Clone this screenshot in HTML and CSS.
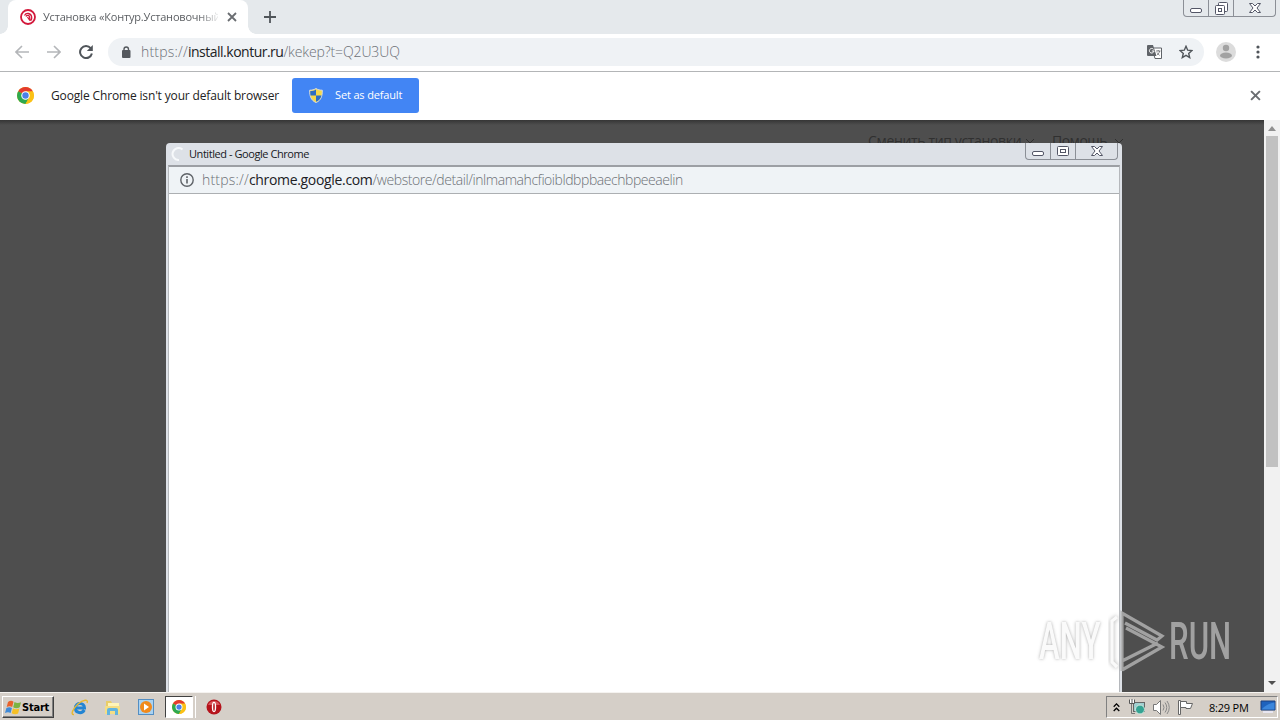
FILE: index.html
```html
<!DOCTYPE html>
<html lang="ru">
<head>
    <meta charset="UTF-8">
    <title>Установка «Контур.Установочный диск»</title>
    <link rel="stylesheet" href="styles.css">
</head>
<body>

    <!-- shared icons -->
    <svg class="defs" width="0" height="0">
        <symbol id="chrome" viewBox="0 0 16 16">
            <circle cx="8" cy="8" r="8" fill="#fbc116"/>
            <path d="M8 8L1.1 4A8 8 0 0 1 14.9 4z" fill="#e33b2e"/>
            <path d="M1.1 4A8 8 0 0 0 8 16L11.4 10 8 8z" fill="#2da94f"/>
            <path d="M8 4h6.9A8 8 0 0 1 8 16l3.4-6z" fill="#fbc116"/>
            <circle cx="8" cy="8" r="4" fill="#fff"/>
            <circle cx="8" cy="8" r="3" fill="#4a80e8"/>
        </symbol>
        <symbol id="close" viewBox="0 0 10 10">
            <path d="M1 1l8 8M9 1L1 9" stroke="#6a6d71" stroke-width="1.8" fill="none"/>
        </symbol>
        <symbol id="win-min" viewBox="0 0 13 6">
            <rect x="0.5" y="0.5" width="11" height="4" rx="1.5" fill="#fff" stroke="#535666"/>
        </symbol>
        <symbol id="win-close" viewBox="0 0 12 10">
            <path d="M.5.5h3L6 3 8.500.5h3L8 5l3.500 4.500h-3L6 7 3.500 9.500h-3L4 5z" fill="#fff" stroke="#535666"/>
        </symbol>
    </svg>

    <div class="browser">
        <div class="tabstrip">
            <div class="tab">
                <svg class="favicon" width="16" height="16" viewBox="0 0 16 16" fill="none" stroke="#d3183b">
                    <circle cx="8" cy="8" r="7" stroke-width="1.8"/>
                    <path d="M4.500 6.500C6 3.500 11 3.700 11.700 8c.2 1.500-.2 2.500-.7 3.500M6 7.500c1-1.800 3.500-1.300 3.700.8L10 12M7.500 8l2 3" stroke-width="1.300"/>
                </svg>
                <span class="tab-title">Установка «Контур.Установочный</span>
                <svg class="tab-close" width="10" height="10"><use href="#close"/></svg>
            </div>
            <svg class="new-tab" width="12" height="12" viewBox="0 0 12 12"><path d="M6 0v12M0 6h12" stroke="#50555a" stroke-width="1.800"/></svg>
            <div class="win-buttons main-buttons">
                <span><svg width="13" height="6"><use href="#win-min"/></svg></span>
                <span><svg width="13" height="13" viewBox="0 0 13 13" fill="#fff" stroke="#535666"><rect x="3.500" y=".5" width="9" height="9" rx="1"/><rect x=".5" y="3.500" width="9" height="9" rx="1"/><rect x="3.500" y="6.500" width="3" height="3"/></svg></span>
                <span class="wide"><svg width="12" height="10"><use href="#win-close"/></svg></span>
            </div>
        </div>

        <div class="toolbar">
            <svg class="nav" width="14" height="14" viewBox="0 0 14 14" fill="none" stroke="#b4b6b9" stroke-width="1.600"><path d="M14 7H1.500M7 1L1 7l6 6"/></svg>
            <svg class="nav" width="14" height="14" viewBox="0 0 14 14" fill="none" stroke="#b4b6b9" stroke-width="1.600"><path d="M0 7h12.500M7 1l6 6-6 6"/></svg>
            <svg class="nav" width="14" height="14" viewBox="0 0 14 14"><path d="M11.700 3.200A6 6 0 1 0 12.900 8.500" fill="none" stroke="#50555a" stroke-width="2"/><path d="M13.800 0v6H7.800z" fill="#50555a"/></svg>
            <div class="omnibox">
                <svg class="lock" width="10" height="12" viewBox="0 0 10 12"><rect x="1" y="4" width="8.500" height="8" rx="1" fill="#55595e"/><path d="M3 5V3.200a2.200 2.200 0 0 1 4.500 0V5" fill="none" stroke="#55595e" stroke-width="1.400"/></svg>
                <span class="url main-url"><i>https://</i><b>install.kontur.ru</b>/kekep?t=Q2U3UQ</span>
                <svg class="translate" width="15" height="14" viewBox="0 0 15 14">
                    <path d="M5 3h9.500v10.500H8z" fill="#fff" stroke="#5f6368"/>
                    <path d="M0 1a1 1 0 0 1 1-1h5l3.500 11H1a1 1 0 0 1-1-1z" fill="#5f6368"/>
                    <path d="M6.500 4.300A2.300 2.300 0 1 0 7 6H4.800" fill="none" stroke="#fff"/>
                    <path d="M9 6h4.500M11.200 5v1M12.700 6c-.5 2-1.500 3-2.700 4M10 7.500l2.500 3" fill="none" stroke="#5f6368" stroke-width=".8"/>
                </svg>
                <svg width="14" height="14" viewBox="0 0 14 14"><path d="M7 1.300l1.700 3.900 4.200.4-3.200 2.800 1 4.200L7 10.400l-3.700 2.200 1-4.200L1.100 5.600l4.200-.4z" fill="none" stroke="#50555a" stroke-width="1.400"/></svg>
            </div>
            <svg class="avatar" width="20" height="20" viewBox="0 0 20 20"><circle cx="10" cy="10" r="10" fill="#dcdcdc"/><circle cx="10" cy="6" r="3.200" fill="#a2a2a2"/><ellipse cx="10" cy="13.500" rx="6" ry="3" fill="#a2a2a2"/></svg>
            <svg class="menu" width="4" height="14" viewBox="0 0 4 14" fill="#50555a"><circle cx="2" cy="2" r="1.600"/><circle cx="2" cy="7" r="1.600"/><circle cx="2" cy="12" r="1.600"/></svg>
        </div>

        <div class="infobar">
            <svg width="17" height="17"><use href="#chrome"/></svg>
            <span class="info-text">Google Chrome isn't your default browser</span>
            <button class="default-btn">
                <svg width="14" height="15" viewBox="0 0 14 15">
                    <path d="M7 .5c2 1.300 4 1.700 6.300 1.700C13.500 8 12 12.500 7 14.500 2 12.500.5 8 .7 2.200 3 2.200 5 1.800 7 .5z" fill="#f5d94b" stroke="#d5dbe0"/>
                    <path d="M7 1.500v6H1.500C1.200 6 1.200 4.500 1.300 3 3.500 3 5.500 2.500 7 1.500zM7 7.500h5.500c-.6 3-2.500 5-5.500 6.300z" fill="#2d6ec4"/>
                </svg>
                <span>Set as default</span>
            </button>
            <svg class="info-close" width="11" height="11"><use href="#close"/></svg>
        </div>

        <div class="viewport">
            <div class="page">
                <div class="page-nav">
                    <span class="type">Сменить тип установки</span>
                    <svg width="10" height="6" viewBox="0 0 10 6"><path d="M1 1l4 4 4-4" fill="none" stroke="#303030"/></svg>
                    <span class="help">Помощь</span>
                    <svg width="10" height="6" viewBox="0 0 10 6"><path d="M1 1l4 4 4-4" fill="none" stroke="#303030"/></svg>
                </div>
            </div>
            <div class="scrollbar">
                <svg width="8" height="5" viewBox="0 0 8 5"><path d="M0 5l4-5 4 5z" fill="#909090"/></svg>
                <div class="thumb"></div>
                <svg class="down" width="8" height="4" viewBox="0 0 8 4"><path d="M0 0h8L4 4z" fill="#505050"/></svg>
            </div>
        </div>
    </div>

    <div class="taskbar">
        <div class="start">
            <svg width="17" height="15" viewBox="0 0 17 15">
                <path d="M3 2c2-1.500 4-1.500 5.500-.3L7.200 7C5.500 6 3.500 6 1.700 7z" fill="#e8622c"/>
                <path d="M9.500 2c2 1.300 4 1.300 6.500.2L14.700 7.300c-2 1.200-4.500 1.200-6.500 0z" fill="#7cb342"/>
                <path d="M1.400 8c2-1 4-1 5.500 0l-1.300 5C4 12 2 12 0 13z" fill="#3f8ad8"/>
                <path d="M8 8.300c2 1.200 4 1.200 6.400.2l-1.300 5c-2 1.200-4.500 1-6.400-.2z" fill="#f6c026"/>
            </svg>
            <span>Start</span>
        </div>
        <div class="quick">
            <svg width="18" height="17" viewBox="0 0 18 17" fill="none">
                <path d="M4.500 9h9c0-6-9-6-9.200 0 0 5.500 7 6 9 2" stroke="#2385d3" stroke-width="3"/>
                <path d="M3 15.500C-1 16 2 9.500 7 5S18 0 16 4" stroke="#e8b830" stroke-width="1.400"/>
            </svg>
            <svg width="18" height="17" viewBox="0 0 18 17">
                <path d="M2 2h5l1 2h7v11H2z" fill="#e9cd68"/>
                <path d="M4 4h11v7H4z" fill="#fff4b8"/>
                <path d="M1 7h15v8H1z" fill="#f4de85"/>
                <path d="M3 16v-5q0-2 2-2h7q2 0 2 2v5h-3v-4H6v4z" fill="#62b4df"/>
            </svg>
            <svg width="18" height="17" viewBox="0 0 18 17">
                <rect x="1.500" y=".5" width="15" height="15" fill="#a9d2f1" stroke="#538ec3"/>
                <circle cx="9" cy="8" r="6" fill="#f18a1c"/>
                <path d="M7 4.500l5 3.500-5 3.500z" fill="#fff"/>
            </svg>
        </div>
        <div class="task-active"><svg width="14" height="14"><use href="#chrome"/></svg></div>
        <div class="task-edge"></div>
        <svg class="opera" width="16" height="16" viewBox="0 0 16 16"><circle cx="8" cy="8" r="7.500" fill="#b5131b"/><path d="M2 6a6.500 6.500 0 0 1 12 0z" fill="#d9555b"/><ellipse cx="8" cy="8" rx="2.200" ry="5.200" fill="#fff"/><ellipse cx="8" cy="8" rx=".8" ry="4" fill="#b5131b"/></svg>
        <div class="tray">
            <svg width="7" height="9" viewBox="0 0 7 9" fill="none" stroke="#000" stroke-width="1.300"><path d="M.7 3.700l2.800-2.800 2.800 2.800M.7 8l2.800-2.800L6.300 8"/></svg>
            <svg class="net" width="17" height="16" viewBox="0 0 17 16">
                <rect x="4.500" y="3.500" width="11" height="9" fill="#9fcfd0" stroke="#666"/>
                <circle cx="11" cy="10.500" r="4.500" fill="#35a393" stroke="#d8e8e0"/>
                <path d="M.5.500v4h5v-4M3 0v4.500" fill="#fff" stroke="#555"/>
                <path d="M2.500 5v9.500H6" fill="none" stroke="#777"/>
            </svg>
            <svg class="sound" width="17" height="15" viewBox="0 0 17 15">
                <path d="M.5 4.500h3l4-4v14l-4-4h-3z" fill="#fff" stroke="#777"/>
                <path d="M10 4.500q2 3 0 6M12 2.500q3.500 5 0 10M14 1q4.500 6.500 0 13" fill="none" stroke="#888"/>
            </svg>
            <svg class="flag" width="16" height="15" viewBox="0 0 16 15"><path d="M.5.500h2v14h-2z" fill="#fff" stroke="#666"/><path d="M2.500 1.500h6v2h6l-2 5H8v-1H2.500z" fill="#fff" stroke="#666"/></svg>
            <span class="clock">8:29 PM</span>
            <svg class="desk" width="16" height="14" viewBox="0 0 16 14"><path d="M1 1h14v9H1z" fill="#1e62bd" stroke="#1d3f7c"/><path d="M1.500 9.500q5-6 13-7v7z" fill="#3b86dc"/><path d="M3 12h10" stroke="#eef" stroke-width="1.500"/></svg>
        </div>
    </div>

    <div class="popup">
        <div class="popup-title">
            <svg class="spinner" width="14" height="14" viewBox="0 0 14 14"><path d="M11.500 2.500A6 6 0 1 0 8 13" fill="none" stroke="#f7f9fb" stroke-width="2"/></svg>
            <span>Untitled - Google Chrome</span>
            <div class="win-buttons">
                <span><svg width="13" height="6"><use href="#win-min"/></svg></span>
                <span><svg width="12" height="10" viewBox="0 0 12 10" fill="#fff" stroke="#535666"><rect x=".5" y=".5" width="11" height="9" rx="1"/><rect x="3.500" y="3.500" width="5" height="3"/></svg></span>
                <span class="wide"><svg width="12" height="10"><use href="#win-close"/></svg></span>
            </div>
        </div>
        <div class="popup-body">
            <div class="popup-address">
                <svg width="14" height="14" viewBox="0 0 14 14"><circle cx="7" cy="7" r="6.200" fill="none" stroke="#5f6368" stroke-width="1.400"/><path d="M7 6v4.500M7 3.300v1.600" stroke="#5f6368" stroke-width="1.600"/></svg>
                <span class="url popup-url"><i>https://</i><b>chrome.google.com</b>/webstore/detail/inlmamahcfioibldbpbaechbpeeaelin</span>
            </div>
        </div>
    </div>

    <!-- watermark over everything -->
    <div class="watermark">
        <span class="mark-any">ANY</span>
        <svg width="58" height="63" viewBox="0 0 58 63" fill="none" stroke-width="3.200">
            <path class="mark-side" d="M9 7L4 11v41l5 5" stroke="#fafafa"/>
            <path d="M14 61V3l40 23-5 4-32-17M18 18l36 19-40 23M14 51l36-18" stroke="#b0b0b0"/>
        </svg>
        <span class="mark-run">RUN</span>
    </div>

</body>
</html>
```
FILE: styles.css
```css
* {
    box-sizing: border-box;
}

body {
    margin: 0;
    width: 1280px;
    height: 720px;
    overflow: hidden;
    position: relative;
    display: flex;
    flex-direction: column;
    font-family: "Open Sans", "Noto Sans", sans-serif;
    font-size: 12px;
    color: #222;
}

svg {
    display: block;
    flex: none;
}

.defs {
    position: absolute;
}

span {
    white-space: nowrap;
}

.browser {
    height: 692px;
    display: flex;
    flex-direction: column;
}

/* tabs */
.tabstrip {
    height: 34px;
    background: #e5e9ec;
    display: flex;
    align-items: flex-start;
}

.tab {
    width: 240px;
    height: 34px;
    margin-left: 8px;
    padding: 0 11px 0 12px;
    display: flex;
    align-items: center;
    position: relative;
    background: #fff;
    border-radius: 8px 8px 0 0;
}

/* flared feet of the active tab */
.tab::before,
.tab::after {
    content: "";
    position: absolute;
    bottom: 0;
    width: 8px;
    height: 8px;
}

.tab::before {
    left: -8px;
    background: radial-gradient(circle at 0 0, transparent 7.5px, #fff 8px);
}

.tab::after {
    right: -8px;
    background: radial-gradient(circle at 100% 0, transparent 7.5px, #fff 8px);
}

.tab-title {
    width: 175px;
    margin-left: 7px;
    padding-bottom: 1px;
    font-size: 11px;
    letter-spacing: -0.19px;
    color: #5c5f63;
    -webkit-mask-image: linear-gradient(to right, #000 155px, transparent 178px);
}

.tab-close {
    margin-left: 9px;
}

.new-tab {
    margin: 11px 0 0 16px;
}

.win-buttons {
    display: flex;
    height: 17px;
    margin-left: auto;
    border: 1px solid #8b8f96;
    border-top: none;
    border-radius: 0 0 4px 4px;
}

.win-buttons span {
    width: 25px;
    display: flex;
    align-items: center;
    justify-content: center;
    border-right: 1px solid #8b8f96;
}

.win-buttons span:first-child {
    align-items: flex-end;
    padding-bottom: 2px;
}

.win-buttons .wide {
    width: 41px;
    border-right: none;
}

.main-buttons {
    margin-right: 4px;
}

/* toolbar */
.toolbar {
    height: 38px;
    padding: 0 20px 2px 15px;
    display: flex;
    align-items: center;
    background: #fff;
    border-bottom: 1px solid #b3b5b7;
}

.nav {
    margin-right: 18px;
}

.omnibox {
    width: 1096px;
    height: 28px;
    margin-left: -3px;
    padding: 0 11px 0 13px;
    display: flex;
    align-items: center;
    background: #eff2f5;
    border-radius: 14px;
}

.url {
    font-size: 14px;
    font-weight: 300;
    color: #6c7075;
}

.url i {
    font-style: normal;
    letter-spacing: 0.2px;
}

.url b {
    font-weight: 400;
    color: #202124;
}

.main-url {
    margin-left: 10px;
    letter-spacing: -0.12px;
}

.main-url b {
    letter-spacing: -0.5px;
}

.translate {
    margin: 0 17px 0 auto;
}

.avatar {
    margin-left: 12px;
}

.menu {
    margin-left: 20px;
}

/* default browser bar */
.infobar {
    height: 48px;
    padding: 0 19px 2px 17px;
    display: flex;
    align-items: center;
    background: #fff;
}

.info-text {
    margin-left: 17px;
    width: 228px;
    letter-spacing: -0.15px;
}

.default-btn {
    width: 127px;
    height: 35px;
    margin-left: 13px;
    padding: 0 0 0 17px;
    display: flex;
    align-items: center;
    gap: 12px;
    border: none;
    border-radius: 3px;
    background: #4285f4;
    color: #fff;
    font-family: inherit;
    font-size: 11px;
    letter-spacing: -0.15px;
}

.default-btn span {
    padding-bottom: 1px;
}

.info-close {
    margin-left: auto;
}

/* dimmed page */
.viewport {
    flex: 1;
    display: flex;
}

.page {
    flex: 1;
    background: linear-gradient(#353535, #4e4e4e 5px);
}

.page-nav {
    display: flex;
    align-items: center;
    margin: 11px 0 0 868px;
    font-size: 14px;
    color: #303030;
}

.page-nav .type {
    width: 157px;
    letter-spacing: -0.35px;
}

.page-nav .help {
    width: 62px;
    margin-left: 17px;
    letter-spacing: -0.5px;
}

.scrollbar {
    width: 16px;
    padding-top: 6px;
    display: flex;
    flex-direction: column;
    align-items: center;
    background: #f1f1f1;
}

.thumb {
    width: 12px;
    height: 331px;
    margin-top: 5px;
    background: #c1c1c1;
}

.down {
    margin: auto 0 7px;
}

/* windows taskbar */
.taskbar {
    height: 28px;
    padding: 1px 2px 0 2px;
    display: flex;
    align-items: center;
    background: #d5cfc8;
    border-top: 1px solid #f5f3f0;
}

.start {
    width: 52px;
    height: 22px;
    padding-left: 2px;
    display: flex;
    align-items: center;
    border: 1px solid;
    border-color: #fff #404040 #404040 #fff;
    box-shadow: inset -1px -1px #808080;
    font-family: "DejaVu Sans Condensed", "DejaVu Sans", sans-serif;
    font-size: 11px;
    font-weight: bold;
    color: #000;
}

.start span {
    letter-spacing: -0.2px;
}

.quick {
    display: flex;
    gap: 15px;
    margin-left: 17px;
}

.task-active {
    width: 28px;
    height: 22px;
    margin-left: 10px;
    display: flex;
    align-items: center;
    justify-content: center;
    background: #fff;
    border: 1px solid;
    border-color: #404040 #fff #fff #404040;
}

.task-edge {
    width: 3px;
    height: 22px;
    border-right: 1px solid #fff;
}

.opera {
    margin-left: 10px;
}

.tray {
    width: 172px;
    height: 22px;
    margin-left: auto;
    padding-left: 6px;
    display: flex;
    align-items: center;
    border: 1px solid;
    border-color: #808080 #fff #fff #808080;
    color: #000;
}

.net {
    margin-left: 9px;
}

.sound {
    margin-left: 7px;
}

.flag {
    margin-left: 8px;
}

.clock {
    width: 40px;
    margin-left: 15px;
    font-size: 11px;
    letter-spacing: -0.2px;
}

.desk {
    margin-left: 11px;
}

/* popup window over the page */
.popup {
    position: absolute;
    left: 166px;
    top: 143px;
    width: 956px;
    height: 549px;
    padding: 0 2px;
    display: flex;
    flex-direction: column;
    background: #dde1e7;
    border-radius: 4px 4px 0 0;
}

.popup-title {
    height: 22px;
    padding-left: 3px;
    display: flex;
    align-items: center;
    font-size: 11px;
    color: #16181c;
}

.popup-title > span {
    margin-left: 4px;
    padding-bottom: 2px;
    letter-spacing: -0.44px;
}

.popup-title .win-buttons {
    align-self: flex-start;
    margin-right: 2px;
}

.popup-body {
    flex: 1;
    background: #fff;
    border: 1px solid #b5b8bc;
    border-top: 2px solid #9c9fa4;
    border-bottom: none;
}

.popup-address {
    height: 27px;
    padding-left: 11px;
    display: flex;
    align-items: center;
    background: #eff3f6;
    border-bottom: 1px solid #acafb2;
}

.popup-url {
    margin-left: 8px;
    padding-bottom: 2px;
    letter-spacing: -0.44px;
}

.popup-url b {
    letter-spacing: -0.33px;
}

/* watermark */
.watermark {
    position: absolute;
    left: 1039px;
    top: 610px;
    display: flex;
    align-items: center;
    font-family: Roboto, sans-serif;
    font-size: 52px;
    font-weight: 500;
    line-height: 62px;
    opacity: 0.85;
}

.mark-any,
.mark-run {
    display: block;
    width: 69px;
    transform: scaleX(0.6);
    transform-origin: left;
}

.mark-any {
    color: #fafafa;
    text-shadow: 0 0 4px #999;
}

.mark-side {
    filter: drop-shadow(0 0 2px #999);
}

.mark-run {
    margin-left: 3px;
    color: #b0b0b0;
}
```
